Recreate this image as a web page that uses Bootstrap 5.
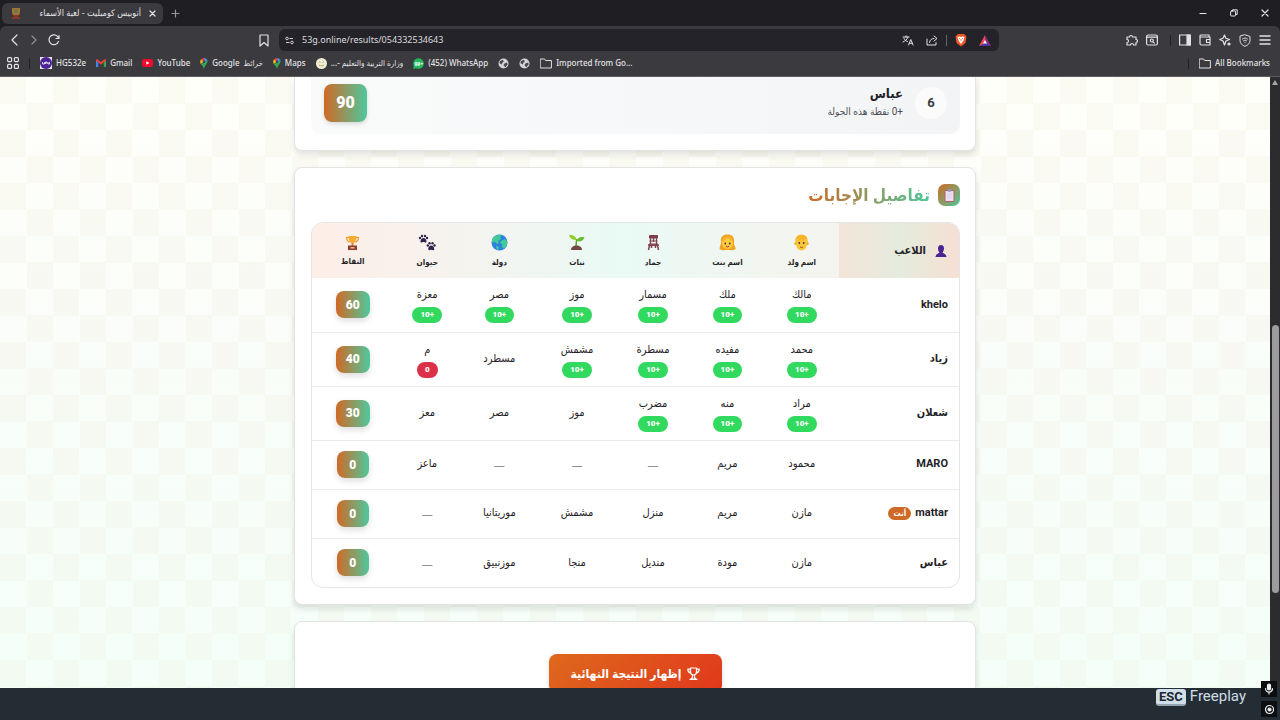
<!DOCTYPE html>
<html lang="ar">
<head>
<meta charset="utf-8">
<meta name="viewport" content="width=device-width, initial-scale=1">
<title>أتوبيس كومبليت - لعبة الأسماء</title>
<link href="https://cdn.jsdelivr.net/npm/bootstrap@5.3.0/dist/css/bootstrap.min.css" rel="stylesheet">
<style>
:root{--ui:"Noto Sans","Open Sans","DejaVu Sans Condensed","DejaVu Sans",sans-serif;--ar:Roboto,"DejaVu Sans Condensed","DejaVu Sans",sans-serif;--score:linear-gradient(90deg,#cf6a26,#4fc79d)}
body{font-family:var(--ui);background:#242d33;overflow:hidden}
svg{display:block;flex:none}
button{padding:0;border:0;background:none;color:inherit}
a{color:inherit;text-decoration:none}
.line{fill:none;stroke:currentColor;stroke-width:1.2;stroke-linecap:round;stroke-linejoin:round}
.line.thin{stroke-width:1}
.tabstrip{background:#1f1e23;height:26px;color:#e4e4e6;padding-left:2px}
.tab{background:#3b3a3f;height:21px;width:161px;border-radius:6px;font-size:9px;padding:0 7px 0 8px}
.window-buttons{gap:23px;padding-right:11px}
.chrome-wrap{background:#1f1e23}
.browser{background:#3b3a3f;color:#e2e2e4;border-bottom:1px solid #5e5c61;border-radius:6px 6px 0 0;font-size:9px}
.tools{height:28px}
.nav-buttons{gap:9px;padding-left:9px}
.address{background:#242329;height:22px;border-radius:6px;width:720px;margin:0 127px 0 10px;padding:0 8px 0 6px}
.address input{background:none;border:0;outline:0;color:#dcdcde;font-size:9px;padding:0;min-width:0}
.side-tools{gap:8px;padding-right:9px;margin-right:0}
.marks{height:22px;gap:10px;padding:0 10px 4px 7px;font-weight:500;font-size:8px;white-space:nowrap}
.marks a{display:flex;align-items:center;gap:4px}
.rule{width:1px;height:11px;background:#232227}
.rule.pale{background:#65646a}
.screen{min-height:0}
.page{overflow:hidden;font-family:var(--ar);color:#1f2328;
 background:repeating-conic-gradient(#fcfefa00 0 25%,#d9cfa518 0 50%) 0 0/53px 53px,linear-gradient(#fffffa,#fafdf9 40%,#f4fff9)}
.stack{max-width:682px;gap:16px}
.panel{background:#fff;border:1px solid #e2e4e3;border-radius:8px;box-shadow:0 4px 6px #0000001c;padding:16px 15px 16px 16px}
.panel-cut{border-top:0;border-radius:0 0 8px 8px;padding-top:0}
.rank-row{height:57px;background:linear-gradient(90deg,#f9fbfb,#f3f4f6);border-radius:0 0 10px 10px;padding:0 13px 6px 13px}
.place{width:32px;height:32px;border-radius:50%;background:#fbfbfc;font-size:13px;font-weight:700;color:#3a3d42}
.total{width:43px;height:38px;border-radius:8px;background:var(--score);color:#fff;font-weight:900;font-size:16px;box-shadow:0 2px 4px #0002}
.who{font-weight:700;font-size:13px;line-height:18px}
.note{font-size:10px;line-height:18px;color:#4a4f56}
.title-icon{width:22px;height:22px;border-radius:7px;background:linear-gradient(135deg,#cf6a26,#4fc79d)}
.heading{font-size:17px;line-height:20px;font-weight:700;background:var(--score);-webkit-background-clip:text;background-clip:text;color:transparent}
.frame{border:1px solid #e3e5e6;border-radius:12px;overflow:hidden}
.answers{width:100%;table-layout:fixed;font-size:11px;text-align:center}
.answers thead{background:linear-gradient(90deg,#fdeee7,#f3f4f0 28%,#eafaf5 48%,#f3f5f0 72%,#f6f3ee)}
.answers th,.answers td{padding:0;vertical-align:middle}
.answers thead th{height:55px;font-size:8px;line-height:11px}
.answers thead svg{margin:0 auto 6px}
.answers thead .player{font-size:11px;background:linear-gradient(90deg,#f3e4d9,#e4ebdd 50%,#f6e0d4)}
.answers thead .player svg{margin:0}
.answers th:first-child{text-align:right;padding-right:11px;font-weight:700}
.answers tbody tr{height:49px}
.answers tbody tr.scored{height:54px}
.answers tbody tr+tr{border-top:1px solid #e9ebec}
.word{display:block;line-height:18px}
.pts{display:inline-flex;align-items:center;height:16px;line-height:16px;padding:0 8px;border-radius:8px;background:#32d95f;color:#fff;font-size:8px;font-weight:900;margin-top:3px;vertical-align:top}
.pts.zero{background:#dc3048}
.answers .none{color:#8d9196;font-family:"Noto Sans",sans-serif;padding-top:2px}
.sum{display:inline-flex;align-items:center;justify-content:center;min-width:32px;height:27px;padding:0 10px;border-radius:8px;background:var(--score);color:#fff;font-size:12px;font-weight:900;box-shadow:0 3px 6px #0002;vertical-align:middle}
.you{background:#cf6a26;color:#fff;font-size:8px;line-height:13px;border-radius:7px;padding:0 5px}
.final{background:linear-gradient(135deg,#dd6a1c,#e2371d);color:#fff;border-radius:8px;height:39px;width:173px;gap:6px;font-size:12px;font-weight:700;box-shadow:0 2px 5px #0002;margin-top:16px}
.scroller{width:10px;background:#2c2c2e;padding:3px 1px 0 2px}
.thumb{height:44%;margin-top:240px;border-radius:4px;background:#9c9c9e}
.game-bar{height:32px;background:#242d33;color:#cfdde6;font-family:Roboto,Inter,sans-serif;font-size:15px;padding:1px 34px 0 0}
.key{background:#cfdfe9;color:#1d262c;font-weight:700;font-size:13px;line-height:15px;border-radius:3px;padding:0 3px;border-bottom:2px solid #94a5b0}
.corner{position:absolute;right:3px;bottom:3px;z-index:5}
.corner button{width:16px;height:16px;background:#0d0e10;color:#f2f2f2;display:flex;align-items:center;justify-content:center}
</style>
</head>
<body class="vh-100 d-flex flex-column">
<svg width="0" height="0" class="position-absolute" aria-hidden="true">
<symbol id="pin" viewBox="0 0 10 14"><path d="M5 0a5 5 0 0 1 4.300 2.400L5 7Z" fill="#4a8df0"/><path d="M.800 2.300A5 5 0 0 1 5 0l1 3.500L3.500 6Z" fill="#e8473a"/><path d="M.800 2.300A5 5 0 0 0 1 7.500l4-3Z" fill="#f7bd17"/><path d="M9.300 2.400C10.800 6 6 9 5 14 4.500 11 2.500 9.500 1 7.500L5.500 6Z" fill="#36a853"/><circle cx="5" cy="4.800" r="1.600" fill="#28477e"/></symbol>
<symbol id="globe" viewBox="0 0 12 12"><circle cx="6" cy="6" r="5.500" fill="#d4d4d6"/><path d="M2 3.500 5 2l1.500 1.500L5 5l-1 2-2.500-1.500ZM7 6l3-1 .500 2L8 10 6 8Z" fill="#4b4a4f"/></symbol>
</svg>

<div class="chrome-wrap flex-shrink-0" dir="ltr">
<div class="tabstrip d-flex align-items-center">
 <div class="tab d-flex align-items-center">
  <svg width="12" height="13" viewBox="0 0 12 13"><path d="M2 1h8v4c0 3-2 4-4 4S2 8 2 5Z" fill="#a67232"/><path d="M4 8h4v2h2v2H2v-2h2Z" fill="#8c352c"/><circle cx="6" cy="4" r="2" fill="#627c56"/></svg>
  <span dir="rtl" class="flex-grow-1 text-end text-nowrap pe-2">أتوبيس كومبليت - لعبة الأسماء</span>
  <button aria-label="Close tab"><svg width="7" height="7" viewBox="0 0 7 7" class="line"><path d="m1 1 5 5m0-5L1 6"/></svg></button>
 </div>
 <button class="ms-2" aria-label="New tab"><svg width="9" height="9" viewBox="0 0 9 9" class="line" stroke-opacity=".6"><path d="M4.500 1v7M1 4.500h7"/></svg></button>
 <div class="window-buttons ms-auto d-flex align-items-center">
  <button aria-label="Minimize"><svg width="8" height="8" viewBox="0 0 8 8" class="line"><path d="M1 4.500h6"/></svg></button>
  <button aria-label="Restore"><svg width="8" height="8" viewBox="0 0 8 8" class="line thin"><rect x=".600" y="2" width="5" height="5" rx="1"/><path d="M2.500 2V.800h4.700v4.700H6"/></svg></button>
  <button aria-label="Close window"><svg width="8" height="8" viewBox="0 0 8 8" class="line"><path d="m1 1 6 6m0-6L1 7"/></svg></button>
 </div>
</div>
<div class="browser">
 <div class="tools d-flex align-items-center">
  <div class="nav-buttons d-flex align-items-center">
   <button aria-label="Back"><svg width="11" height="12" viewBox="0 0 11 12" class="line"><path d="M8 1 3 6l5 5"/></svg></button>
   <button aria-label="Forward" class="opacity-50"><svg width="10" height="12" viewBox="0 0 10 12" class="line"><path d="m3 2 4 4-4 4"/></svg></button>
   <button aria-label="Reload"><svg width="12" height="12" viewBox="0 0 12 12" class="line"><path d="M10.500 7.500a4.900 4.900 0 1 1 0-3.500M11 1.500V4.500H8"/></svg></button>
  </div>
  <button aria-label="Bookmark page" class="ms-auto"><svg width="10" height="13" viewBox="0 0 10 13" class="line"><path d="M1 1h8v11L5 8.500 1 12Z"/></svg></button>
  <div class="address d-flex align-items-center">
   <svg class="me-1" width="9" height="9" viewBox="0 0 9 9" fill="none" stroke="#d0d0d2"><circle cx="2" cy="2.500" r="1.300"/><path d="M4.500 2.500H8M1 6.500h3.500"/><circle cx="7" cy="6.500" r="1.300"/></svg>
   <input class="flex-grow-1 ms-1" aria-label="Address" value="53g.online/results/054332534643">
   <div class="d-flex align-items-center gap-2">
    <button aria-label="Translate" class="me-1"><svg width="12" height="11" viewBox="0 0 12 11" class="line thin"><path d="M1 2h6M4 .800V2M6 2C5 5 3 6 1 7M2 3.500c1 2 2 2.500 3.500 3M6.500 10 8.800 4.500 11 10M7.300 8.300h3"/></svg></button>
    <button aria-label="Share"><svg width="12" height="11" viewBox="0 0 12 11" class="line thin"><path d="M1 4v6h9V7.500M3.500 7.500C4 4.500 6 3.500 8 3.500M8 1l3 2.500L8 6"/></svg></button>
    <span class="rule pale"></span>
    <button aria-label="Shields"><svg width="12" height="14" viewBox="0 0 12 14"><path d="M3 1h6l2.500 2.500L10.500 10 6 13.500 1.500 10 .500 3.500Z" fill="#ec5a2a"/><path d="m2.500 4 2-.500L6 4l1.500-.500 2 .500-1 3.500L6 11 3.500 7.500Z" fill="#fff"/><path d="m4 5 1 1m3-1L7 6M6 6v2" stroke="#ec5a2a" stroke-width=".800"/></svg></button>
    <button aria-label="Rewards" class="ms-1"><svg width="12" height="11" viewBox="0 0 12 11"><path d="M6 0 0 11h6Z" fill="#f04a50"/><path d="m6 0 6 11H6Z" fill="#8b2d86"/><path d="m0 11 6-3 6 3Z" fill="#4437a8"/><path d="m6 5 2 3.500H4Z" fill="#fff"/></svg></button>
   </div>
  </div>
  <div class="side-tools d-flex align-items-center">
   <button aria-label="Extensions"><svg width="12" height="12" viewBox="0 0 12 12" class="line"><path d="M1 3h2.500a1.500 1.500 0 1 1 3 0H10v2.500a1.500 1.500 0 1 1 0 3V11H7.500a1.500 1.500 0 0 0-3 0H1V8.500a1.500 1.500 0 0 0 0-3Z"/></svg></button>
   <button aria-label="Search tabs"><svg width="12" height="12" viewBox="0 0 12 12" class="line"><rect x=".600" y="1" width="10.800" height="10" rx="1.500"/><path d="M1 3.200h10"/><circle cx="5.800" cy="6.500" r="1.500"/><path d="m7 7.800 1.300 1.300"/></svg></button>
   <span class="rule mx-1 me-0"></span>
   <button aria-label="Side panel"><svg width="12" height="12" viewBox="0 0 12 12" class="line"><rect x=".600" y="1" width="10.800" height="10"/><path d="M8 1h3v10H8Z" fill="currentColor"/></svg></button>
   <button aria-label="Wallet"><svg width="12" height="12" viewBox="0 0 12 12" class="line"><path d="M10 3V1H2a1 1 0 0 0-1 1v7.500a1.500 1.500 0 0 0 1.500 1.500H11V3H2M11 5.500H7.500v3H11"/></svg></button>
   <button aria-label="Assistant"><svg width="12" height="12" viewBox="0 0 12 12" class="line"><path d="m5.500 1 1.300 3.200L10.500 5.500 7 7 5.500 11 4 7 .800 5.500 4 4.200Z"/><circle cx="10" cy="10" r="1" fill="currentColor"/></svg></button>
   <button aria-label="VPN"><svg width="12" height="13" viewBox="0 0 12 13" class="line thin"><path d="m6 .800 5 1.700v4C11 9.500 8.500 11.500 6 12.300 3.500 11.500 1 9.500 1 6.500v-4Z"/><path d="M3.500 5c1.500-1.300 3.500-1.300 5 0M4.500 6.800c1-.800 2-.800 3 0M6 8.500v.200"/></svg></button>
   <button aria-label="Menu"><svg width="12" height="12" viewBox="0 0 12 12" stroke="currentColor" stroke-width="1.500"><path d="M.500 2h11M.500 6h11M.500 10h11"/></svg></button>
  </div>
 </div>
 <nav class="marks d-flex align-items-center" aria-label="Bookmarks">
  <button aria-label="Apps"><svg width="12" height="12" viewBox="0 0 12 12" class="line"><rect x=".600" y=".600" width="4" height="4" rx="1"/><rect x="7.400" y=".600" width="4" height="4" rx="1"/><rect x=".600" y="7.400" width="4" height="4" rx="1"/><rect x="7.400" y="7.400" width="4" height="4" rx="1"/></svg></button>
  <span class="rule"></span>
  <a href="#"><svg width="12" height="12" viewBox="0 0 12 12"><path fill="#e9e4f5" d="M0 0h12v12H0z"/><circle cx="6" cy="6" r="6" fill="#4b2396"/><path d="M2.500 5v2h2V5m1 2V5h1.500v2M8 5v2h1.500V5" stroke="#fff" fill="none" stroke-width=".800"/></svg>HG532e</a>
  <a href="#"><svg width="10" height="8" viewBox="0 0 10 8"><path d="M0 1v7h2.200V3Z" fill="#4285f4"/><path d="M10 1v7H7.800V3Z" fill="#34a853"/><path d="M0 1.500C0 0 1.500 0 2.200.800L5 3 7.800.800C8.500 0 10 0 10 1.500L5 5.700Z" fill="#ea4335"/></svg>Gmail</a>
  <a href="#"><svg width="11" height="8" viewBox="0 0 11 8"><rect width="11" height="8" rx="2.200" fill="#f00a2c"/><path d="m4.300 2.200 3.200 1.800-3.200 1.800Z" fill="#fff"/></svg>YouTube</a>
  <a href="#"><svg width="8" height="11"><use href="#pin"/></svg>Google <span dir="rtl">خرائط</span></a>
  <a href="#"><svg width="8" height="11"><use href="#pin"/></svg>Maps</a>
  <a href="#"><svg width="11" height="11" viewBox="0 0 11 11"><circle cx="5.500" cy="5.500" r="5.500" fill="#eeedd5"/><path d="M3 4h1.500M6.500 4H8M3 7c2 1 3.500 1 5 0" stroke="#b5a15c" fill="none"/></svg><span dir="rtl">وزارة التربية والتعليم -...</span></a>
  <a href="#"><svg width="11" height="11" viewBox="0 0 11 11"><circle cx="5.500" cy="5.500" r="5.300" fill="#20b95c"/><path d="M0 11 1 7l3 3Z" fill="#20b95c"/><text x="1.500" y="7.500" font-size="5" font-weight="700" fill="#fff">99+</text></svg>(452) WhatsApp</a>
  <a href="#" aria-label="Site"><svg width="11" height="11"><use href="#globe"/></svg></a>
  <a href="#" aria-label="Site"><svg width="11" height="11"><use href="#globe"/></svg></a>
  <a href="#"><svg width="12" height="11" viewBox="0 0 12 11" class="line thin"><path d="M.600 1h4l1 1.500h5.800V10H.600Z"/></svg>Imported from Go...</a>
  <span class="rule ms-auto"></span>
  <a href="#"><svg width="12" height="11" viewBox="0 0 12 11" class="line thin"><path d="M.600 1h4l1 1.500h5.800V10H.600Z"/></svg>All Bookmarks</a>
 </nav>
</div>
</div>

<div class="screen flex-grow-1 d-flex" dir="ltr">
<main class="page flex-grow-1" dir="rtl">
 <div class="stack mx-auto d-flex flex-column">
  <section class="panel panel-cut">
   <div class="rank-row d-flex align-items-center gap-2">
    <span class="place d-flex align-items-center justify-content-center">6</span>
    <div class="me-1"><div class="who">عباس</div><div class="note">+0 نقطة هذه الجولة</div></div>
    <span class="total me-auto d-flex align-items-center justify-content-center">90</span>
   </div>
  </section>
  <section class="panel">
   <div class="d-flex align-items-center gap-2 mb-3">
    <span class="title-icon d-flex align-items-center justify-content-center"><svg width="11" height="13" viewBox="0 0 11 13"><rect x=".500" y="1" width="10" height="12" rx="1.500" fill="#b55e5d"/><path d="M1.500 2h8v10h-8Z" fill="#e9e2f6"/><rect x="3.500" y=".300" width="4" height="2.400" rx=".800" fill="#9b94b4"/><path d="M3 5h5M3 7h5M3 9h4" stroke="#cfc5e2" stroke-width=".700"/></svg></span>
    <h2 class="heading m-0">تفاصيل الإجابات</h2>
   </div>
   <div class="frame">
   <table class="answers">
    <colgroup><col style="width:18.6%"><col style="width:11.4%"><col style="width:11.6%"><col style="width:11.4%"><col style="width:12.1%"><col style="width:11.9%"><col style="width:10.4%"><col style="width:12.6%"></colgroup>
    <thead><tr>
     <th class="player" scope="col"><span class="d-flex align-items-center gap-2"><svg width="14" height="14" viewBox="0 0 14 14"><path d="M7 1c2 0 3 1.300 3 3.500S8.800 8 8.500 8.500C9 9.500 12 9.500 12.500 13h-11C2 9.500 5 9.500 5.500 8.500 5.200 8 4 6.700 4 4.500S5 1 7 1Z" fill="#4b2394"/></svg>اللاعب</span></th>
     <th scope="col"><svg width="17" height="17" viewBox="0 0 17 17"><circle cx="2.800" cy="9.500" r="1.500" fill="#eba928"/><circle cx="14.200" cy="9.500" r="1.500" fill="#eba928"/><path d="M3 6h11v5q-1 5-5.500 5.500Q4 16 3 11Z" fill="#fbc53a"/><path d="M2.500 8.500C1.500 3 5 .500 8 .700c4-.500 7.500 2 6.500 7.800l-1.500-3q-5 2-9 0Z" fill="#f8b528"/><circle cx="6.300" cy="9" r=".900" fill="#46352d"/><circle cx="10.700" cy="9" r=".900" fill="#46352d"/><path d="M7 13q1.500 1 3 0" stroke="#9b4d24" fill="none"/></svg>اسم ولد</th>
     <th scope="col"><svg width="17" height="17" viewBox="0 0 17 17"><path d="M2 8C1 3 4 .500 8.500.500S16 3 15 9c0 3 2 4 1.500 6-2 2-5 1-5.500 1H6s-3.500 1-5.500-1C.500 12 2 11 2 8Z" fill="#f2a420"/><circle cx="8.500" cy="9.300" r="5.500" fill="#fdcb44"/><path d="M3 8c2-1 4-2 5-4 2 2 4 3 6 4-.500-4-2-5-5.500-5S3 5 3 8Z" fill="#f9b92d"/><circle cx="6.300" cy="9.500" r=".900" fill="#46352d"/><circle cx="10.700" cy="9.500" r=".900" fill="#46352d"/><path d="M6.800 12.300q1.700 1.300 3.400 0" stroke="#b3392a" fill="none"/></svg>اسم بنت</th>
     <th scope="col"><svg width="17" height="17" viewBox="0 0 17 17" fill="none" stroke="#803f4d"><path d="M4.500 1.500h8v2.500h-8Z" fill="#803f4d"/><path d="M5.500 3v7M11.500 3v7M8.500 4v4" stroke-width="1.300"/><path d="M4.500 7h8M4 10h9l.500 1.500h-10Z" fill="#9d5360"/><path d="M4.500 11.500 3.500 16M12.500 11.500l1 4.500M6.500 12v2M10.500 12v2" stroke-width="1.500"/></svg>جماد</th>
     <th scope="col"><svg width="17" height="17" viewBox="0 0 17 17"><path d="M8 12c.500-3 0-5 1-7" stroke="#54a330" stroke-width="1.500" fill="none"/><path d="M8.500 6C5 6 2 5 1 1c4-.500 7 1 7.500 5Z" fill="#8fcf2d"/><path d="M8.500 7C9 4 13 2 16.500 3.500 15 7 12 8 8.500 7Z" fill="#6abb2e"/><path d="M3 16c0-3 2.500-4.500 5.500-4.500S14 13 14 16Z" fill="#744642"/></svg>نبات</th>
     <th scope="col"><svg width="17" height="17" viewBox="0 0 17 17"><circle cx="8.500" cy="8.500" r="8" fill="#2b83e0"/><path d="M2 4C4 1 8 0 11 1L9 3l1 2-3 2 1 2-2 1-2-2-3 .500C.700 6.500 1.300 5 2 4Zm8 3 4-2 2 2c1 3-.500 6-3 7.500L11 13V10L9 9ZM5 12l3 1-1 3c-1.500-.500-2-2-2-4Z" fill="#41ca96"/></svg>دولة</th>
     <th scope="col"><svg width="18" height="17" viewBox="0 0 18 17" fill="#30244e"><circle cx="2" cy="4" r="1.200"/><circle cx="4" cy="2" r="1.200"/><circle cx="7" cy="2" r="1.200"/><circle cx="9" cy="4" r="1.200"/><path d="M2.500 7.500c0-2 1.500-3.500 3-3.500s3 1.500 3 3.500S6.500 8 5.500 8s-3 1.500-3-.500Z"/><circle cx="9.800" cy="11.500" r="1.200"/><circle cx="11.500" cy="9.300" r="1.200"/><circle cx="14.500" cy="9.300" r="1.200"/><circle cx="16.500" cy="11.500" r="1.200"/><path d="M10.200 15c0-2 1.500-3.500 3-3.500s3 1.500 3 3.500-2 .800-3 .800-3 1.200-3-.800Z"/></svg>حيوان</th>
     <th scope="col"><svg width="15" height="15" viewBox="0 0 15 15"><path d="M4 2.500H1.500Q2 7 5 7m6-4.500h2.500Q13 7 10 7" fill="none" stroke="#e8952a" stroke-width="1.200"/><path d="M3.500 1h8q0 7-4 7.500-4-.500-4-7.500Z" fill="#f9ac2d"/><path d="M6.500 8h2v3h-2Z" fill="#d98026"/><path d="M3 10.500h9V15H3Z" fill="#8d3d35"/><path d="M5.500 12h4v1.500h-4Z" fill="#f2bb6d"/></svg><strong>النقاط</strong></th>
    </tr></thead>
    <tbody>
     <tr class="scored"><th scope="row">khelo</th><td><span class="word">مالك</span><span class="pts">+10</span></td><td><span class="word">ملك</span><span class="pts">+10</span></td><td><span class="word">مسمار</span><span class="pts">+10</span></td><td><span class="word">موز</span><span class="pts">+10</span></td><td><span class="word">مصر</span><span class="pts">+10</span></td><td><span class="word">معزة</span><span class="pts">+10</span></td><td><span class="sum">60</span></td></tr>
     <tr class="scored"><th scope="row">زياد</th><td><span class="word">محمد</span><span class="pts">+10</span></td><td><span class="word">مفيده</span><span class="pts">+10</span></td><td><span class="word">مسطرة</span><span class="pts">+10</span></td><td><span class="word">مشمش</span><span class="pts">+10</span></td><td>مسطرد</td><td><span class="word">م</span><span class="pts zero">0</span></td><td><span class="sum">40</span></td></tr>
     <tr class="scored"><th scope="row">شعلان</th><td><span class="word">مراد</span><span class="pts">+10</span></td><td><span class="word">منه</span><span class="pts">+10</span></td><td><span class="word">مضرب</span><span class="pts">+10</span></td><td>موز</td><td>مصر</td><td>معز</td><td><span class="sum">30</span></td></tr>
     <tr><th scope="row">MARO</th><td>محمود</td><td>مريم</td><td class="none">—</td><td class="none">—</td><td class="none">—</td><td>ماعز</td><td><span class="sum">0</span></td></tr>
     <tr><th scope="row"><span class="d-flex align-items-center gap-1">mattar <span class="you">أنت</span></span></th><td>مازن</td><td>مريم</td><td>منزل</td><td>مشمش</td><td>موريتانيا</td><td class="none">—</td><td><span class="sum">0</span></td></tr>
     <tr><th scope="row">عباس</th><td>مازن</td><td>مودة</td><td>منديل</td><td>منجا</td><td>موزنبيق</td><td class="none">—</td><td><span class="sum">0</span></td></tr>
    </tbody>
   </table>
   </div>
  </section>
  <section class="panel text-center">
   <button class="final d-inline-flex align-items-center justify-content-center"><svg width="13" height="13" viewBox="0 0 13 13" class="line"><path d="M3.500 1h6v4a3 3 0 0 1-6 0ZM3.500 2.200H.800q0 3.300 3 3.800M9.500 2.200h2.700q0 3.300-3 3.800M5.500 8v2.500L4 12h5l-1.500-1.500V8M3 12.300h7"/></svg>إظهار النتيجة النهائية</button>
  </section>
 </div>
</main>
<div class="scroller" aria-hidden="true"><svg width="6" height="5" viewBox="0 0 6 5"><path d="M3 0 6 5H0Z" fill="#a5a5a7"/></svg><div class="thumb"></div></div>
</div>
<footer class="game-bar flex-shrink-0 d-flex align-items-start justify-content-end gap-1" dir="ltr"><span class="key">ESC</span><span class="lh-1">Freeplay</span></footer>
<div class="corner d-flex flex-column gap-1">
 <button aria-label="Microphone"><svg width="10" height="12" viewBox="0 0 10 12" class="line"><rect x="3.500" y="1" width="3" height="6" rx="1.500" fill="currentColor"/><path d="M1.500 5.500a3.500 3.500 0 0 0 7 0M5 9v2"/></svg></button>
 <button aria-label="Record"><svg width="11" height="11" viewBox="0 0 11 11" class="line"><circle cx="5.500" cy="5.500" r="4"/><circle cx="5.500" cy="5.500" r="1.500" fill="currentColor"/></svg></button>
</div>
<script src="https://cdn.jsdelivr.net/npm/bootstrap@5.3.0/dist/js/bootstrap.bundle.min.js"></script>
</body>
</html>
